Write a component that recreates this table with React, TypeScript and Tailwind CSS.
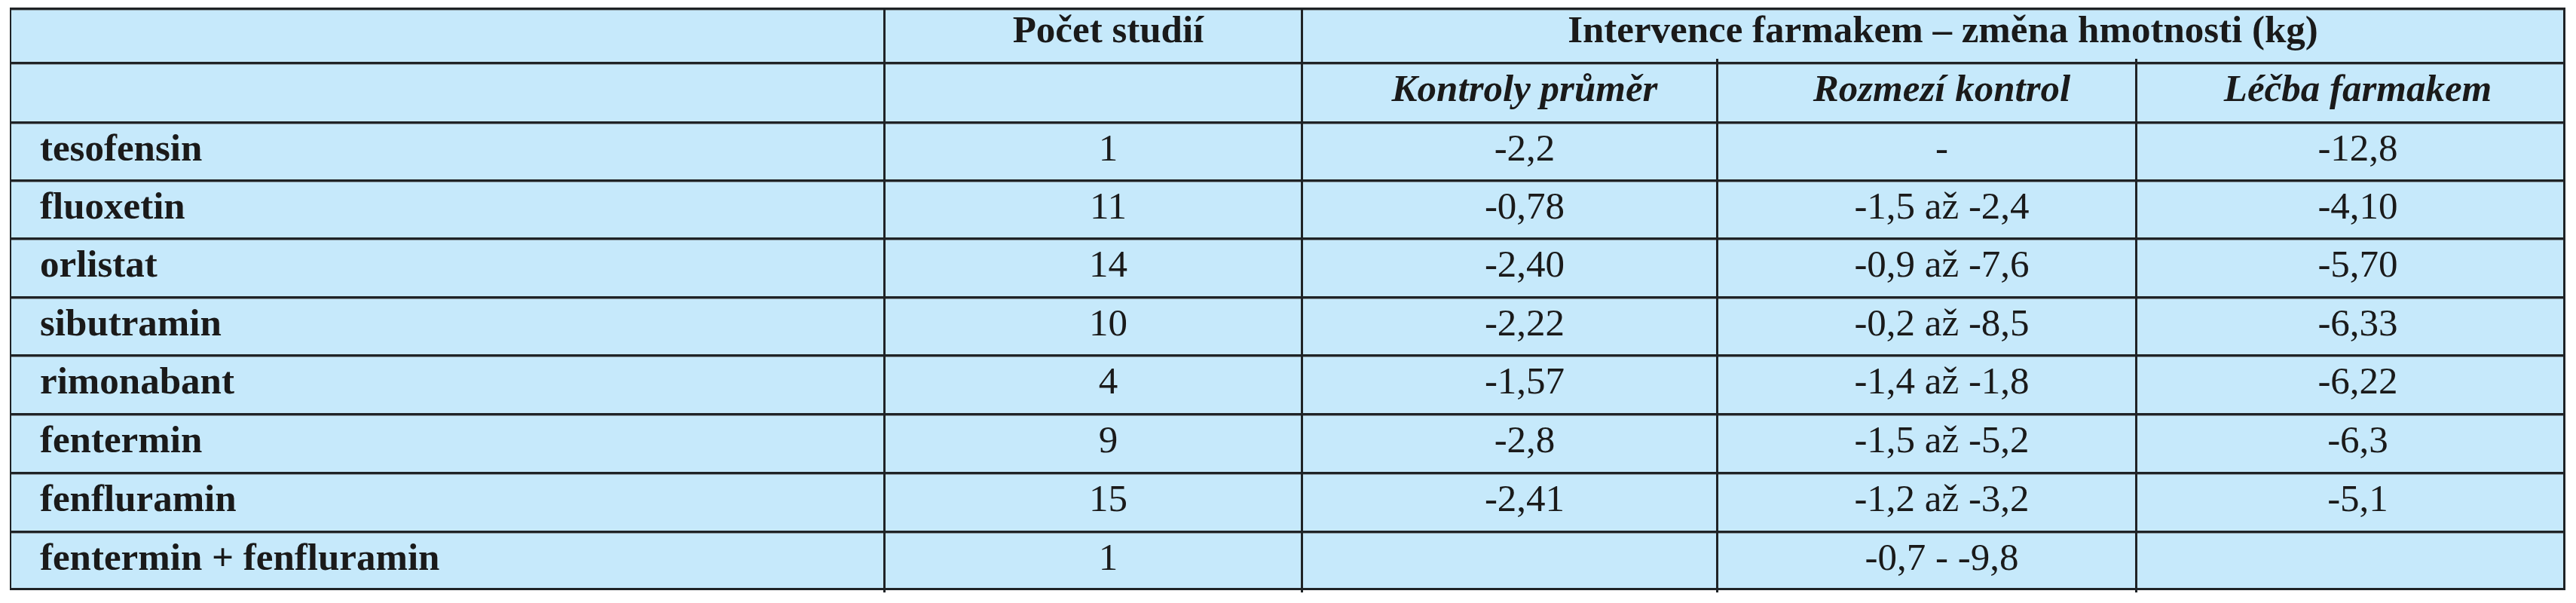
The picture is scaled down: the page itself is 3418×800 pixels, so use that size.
import React from "react";

type Row = { name: string; n: string; avg: string; range: string; drug: string };

const rows: Row[] = [
  { name: "tesofensin", n: "1", avg: "-2,2", range: "-", drug: "-12,8" },
  { name: "fluoxetin", n: "11", avg: "-0,78", range: "-1,5 až -2,4", drug: "-4,10" },
  { name: "orlistat", n: "14", avg: "-2,40", range: "-0,9 až -7,6", drug: "-5,70" },
  { name: "sibutramin", n: "10", avg: "-2,22", range: "-0,2 až -8,5", drug: "-6,33" },
  { name: "rimonabant", n: "4", avg: "-1,57", range: "-1,4 až -1,8", drug: "-6,22" },
  { name: "fentermin", n: "9", avg: "-2,8", range: "-1,5 až -5,2", drug: "-6,3" },
  { name: "fenfluramin", n: "15", avg: "-2,41", range: "-1,2 až -3,2", drug: "-5,1" },
  { name: "fentermin + fenfluramin", n: "1", avg: "", range: "-0,7 - -9,8", drug: "" },
];

const cell =
  "bg-[#c6e9fb] border-r-[3px] border-b-[3px] border-[#1f2326] shadow-[inset_0_1px_0_#8c9ba3] text-[51px] leading-[51px] text-[#1a1a1a] whitespace-nowrap";
const topStub =
  "relative after:absolute after:right-[-3px] after:top-[-7px] after:w-[3px] after:h-[7px] after:bg-[#1f2326]";
const bottomStub =
  "relative after:absolute after:right-[-3px] after:bottom-[-6px] after:w-[3px] after:h-[6px] after:bg-[#1f2326]";

export default function App() {
  return (
    <div
      className="w-[3418px] h-[800px] bg-white pt-[10px] pl-[13px]"
      style={{ fontFamily: '"Liberation Serif", "Times New Roman", serif' }}
    >
      <div className="w-[3391px] grid grid-cols-[1160px_554px_551px_556px_568px] grid-rows-[72px_79px_77px_77px_78px_77px_78px_78px_78px_76px] border-t-[3px] border-l-2 border-[#1f2326]">
        {/* header row 1 */}
        <div className={`${cell} pt-[1px]`}></div>
        <div className={`${cell} pt-[1px] pl-[40px] text-center font-bold`}>Počet studií</div>
        <div className={`${cell} col-span-3 pt-[1px] pl-[26px] text-center font-bold`}>
          Intervence farmakem – změna hmotnosti (kg)
        </div>

        {/* header row 2 */}
        <div className={`${cell} pt-[7px]`}></div>
        <div className={`${cell} pt-[7px]`}></div>
        <div className={`${cell} ${topStub} pt-[7px] pl-[40px] text-center font-bold italic`}>
          Kontroly průměr
        </div>
        <div className={`${cell} ${topStub} pt-[7px] pl-[40px] text-center font-bold italic`}>
          Rozmezí kontrol
        </div>
        <div className={`${cell} pt-[7px] pl-[20px] text-center font-bold italic`}>Léčba farmakem</div>

        {rows.map((r, i) => {
          const last = i === rows.length - 1;
          const stub = last ? bottomStub : "";
          return (
            <React.Fragment key={r.name}>
              <div className={`${cell} ${stub} pt-[7px] pl-[38px] font-bold`}>{r.name}</div>
              <div className={`${cell} ${stub} pt-[7px] pl-[40px] text-center`}>{r.n}</div>
              <div className={`${cell} ${stub} pt-[7px] pl-[40px] text-center`}>{r.avg}</div>
              <div className={`${cell} ${stub} pt-[7px] pl-[40px] text-center`}>{r.range}</div>
              <div className={`${cell} pt-[7px] pl-[20px] text-center`}>{r.drug}</div>
            </React.Fragment>
          );
        })}
      </div>
    </div>
  );
}
